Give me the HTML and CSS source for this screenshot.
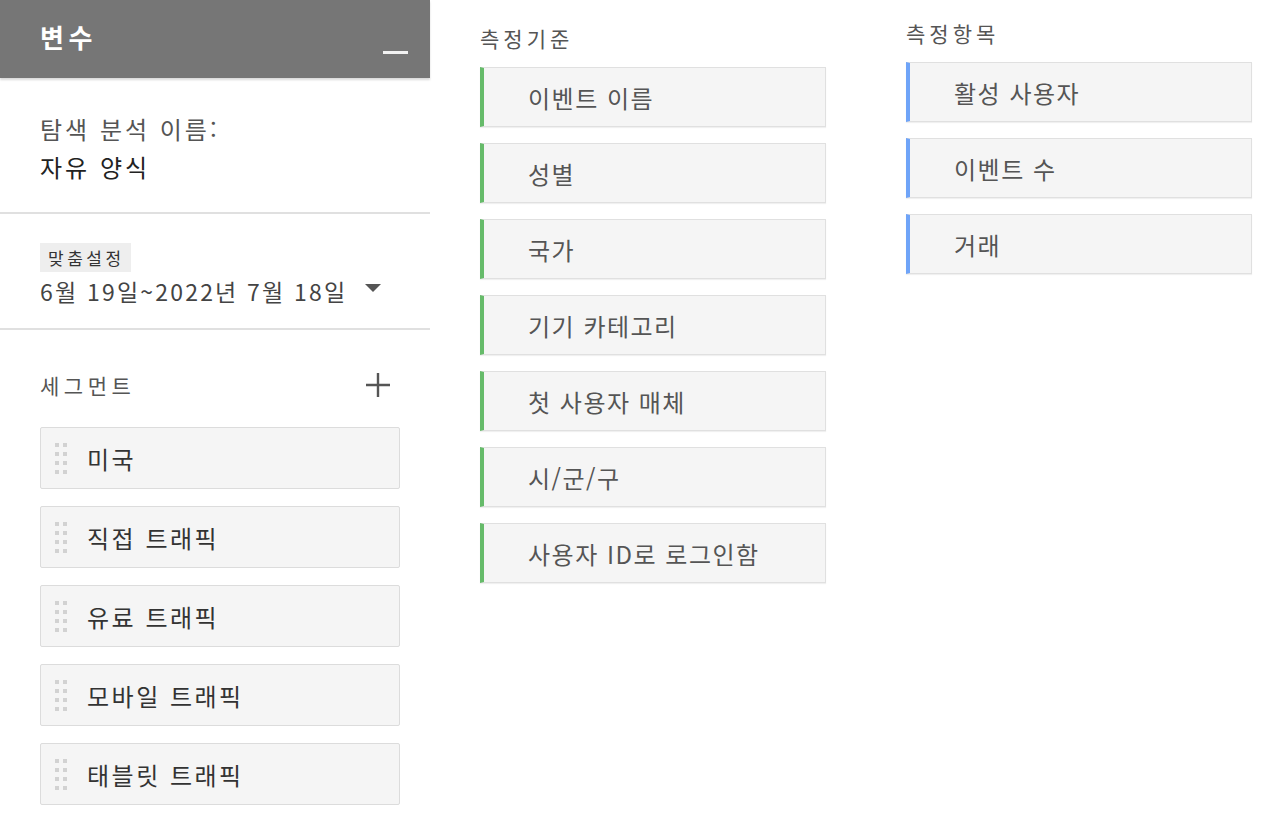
FILE: index.html
```html
<!DOCTYPE html>
<html lang="ko">
<head>
<meta charset="utf-8">
<link rel="stylesheet" href="styles.css">
</head>
<body>
<div class="page">
  <aside class="panel">
    <header class="panel-head">
      <h1 class="panel-title">변수</h1>
      <span class="minimize"></span>
    </header>
    <section class="name-block">
      <div class="name-label">탐색 분석 이름:</div>
      <div class="name-value">자유 양식</div>
    </section>
    <section class="date-block">
      <span class="chip">맞춤설정</span>
      <div class="date-row">
        <span class="date-text">6월 19일~2022년 7월 18일</span>
        <span class="caret"></span>
      </div>
    </section>
    <section class="segments">
      <div class="seg-head">
        <span class="seg-title">세그먼트</span>
        <svg class="plus" width="28" height="28" viewBox="0 0 28 28"><path d="M14 2v24M2 14h24" stroke="#555" stroke-width="2.4"/></svg>
      </div>
      <ul class="seg-list">
        <li class="seg-item"><span class="grip"><i></i><i></i><i></i><i></i><i></i><i></i><i></i><i></i></span>미국</li>
        <li class="seg-item"><span class="grip"><i></i><i></i><i></i><i></i><i></i><i></i><i></i><i></i></span>직접 트래픽</li>
        <li class="seg-item"><span class="grip"><i></i><i></i><i></i><i></i><i></i><i></i><i></i><i></i></span>유료 트래픽</li>
        <li class="seg-item"><span class="grip"><i></i><i></i><i></i><i></i><i></i><i></i><i></i><i></i></span>모바일 트래픽</li>
        <li class="seg-item"><span class="grip"><i></i><i></i><i></i><i></i><i></i><i></i><i></i><i></i></span>태블릿 트래픽</li>
      </ul>
    </section>
  </aside>
  <section class="col col-dim">
    <h2 class="col-title">측정기준</h2>
    <ul class="chip-list">
      <li class="field dim">이벤트 이름</li>
      <li class="field dim">성별</li>
      <li class="field dim">국가</li>
      <li class="field dim">기기 카테고리</li>
      <li class="field dim">첫 사용자 매체</li>
      <li class="field dim">시/군/구</li>
      <li class="field dim">사용자 ID로 로그인함</li>
    </ul>
  </section>
  <section class="col col-met">
    <h2 class="col-title">측정항목</h2>
    <ul class="chip-list">
      <li class="field met">활성 사용자</li>
      <li class="field met">이벤트 수</li>
      <li class="field met">거래</li>
    </ul>
  </section>
</div>
</body>
</html>
```

FILE: styles.css
```css
* { box-sizing: border-box; }
html, body { margin: 0; padding: 0; background: #fff; }
body {
  font-family: "Noto Sans CJK KR", "Noto Sans", "Liberation Sans", sans-serif;
  color: #333;
  width: 1280px;
  height: 819px;
  overflow: hidden;
}
ul { list-style: none; margin: 0; padding: 0; }
h1, h2 { margin: 0; font-weight: normal; }

.page { display: flex; align-items: flex-start; }

.panel { width: 430px; flex: none; }
.panel-head {
  height: 78px;
  background: #767676;
  display: flex;
  align-items: flex-start;
  justify-content: space-between;
  padding: 0 22px 0 40px;
  box-shadow: 0 2px 2px rgba(0,0,0,0.15);
}
.panel-title {
  color: #fff;
  font-size: 26px;
  font-weight: bold;
  line-height: 1;
  letter-spacing: 4.5px;
  margin-top: 24px;
}
.minimize {
  width: 25px;
  height: 3px;
  background: #f2f2f2;
  margin-top: 51px;
}

.name-block {
  padding: 32px 40px 0;
  height: 136px;
  border-bottom: 2px solid #e0e0e0;
}
.name-label { font-size: 24px; color: #555; line-height: 38px; letter-spacing: 3px; }
.name-value { font-size: 24px; color: #222; line-height: 38px; letter-spacing: 3px; }

.date-block {
  padding: 29px 40px 0;
  height: 116px;
  border-bottom: 2px solid #e0e0e0;
}
.chip {
  display: inline-block;
  background: #eeeeee;
  font-size: 17px;
  color: #333;
  line-height: 29px;
  padding: 0 6px 0 8px;
  letter-spacing: 3.5px;
}
.date-row {
  display: flex;
  align-items: center;
  margin-top: 2px;
}
.date-text { font-size: 23px; color: #444; line-height: 34px; letter-spacing: 2.2px; }
.caret {
  width: 0; height: 0;
  border-left: 8px solid transparent;
  border-right: 8px solid transparent;
  border-top: 8px solid #555;
  margin-left: 18px;
  margin-top: -6px;
}

.segments { padding: 40px 30px 0 40px; }
.seg-head {
  display: flex;
  justify-content: space-between;
  align-items: center;
  padding-right: 8px;
  height: 30px;
}
.seg-title { font-size: 21px; color: #555; letter-spacing: 4.5px; }
.seg-list {
  display: flex;
  flex-direction: column;
  gap: 17px;
  margin-top: 27px;
}
.seg-item {
  height: 62px;
  background: #f5f5f5;
  border: 1px solid #dcdcdc;
  border-radius: 2px;
  display: flex;
  align-items: center;
  padding-left: 14px;
  font-size: 24px;
  letter-spacing: 2.5px;
  color: #333;
}
.grip {
  display: grid;
  grid-template-columns: 4px 4px;
  grid-auto-rows: 4px;
  column-gap: 4px;
  row-gap: 5px;
  margin-right: 20px;
}
.grip i { display: block; background: #d2d2d2; }

.col { width: 346px; flex: none; }
.col-dim { margin-left: 50px; padding-top: 24px; }
.col-met { margin-left: 80px; padding-top: 19px; }
.col-title { font-size: 21px; color: #555; line-height: 28px; letter-spacing: 4px; }
.chip-list {
  display: flex;
  flex-direction: column;
  gap: 16px;
  margin-top: 15px;
}
.field {
  height: 60px;
  background: #f5f5f5;
  border: 1px solid #e0e0e0;
  border-left: 4px solid #66bb6a;
  box-shadow: 0 1px 1px rgba(0,0,0,0.06);
  display: flex;
  align-items: center;
  padding-left: 44px;
  font-size: 24px;
  letter-spacing: 1.5px;
  color: #555;
}
.field.met { border-left-color: #6fa4f8; }
```
